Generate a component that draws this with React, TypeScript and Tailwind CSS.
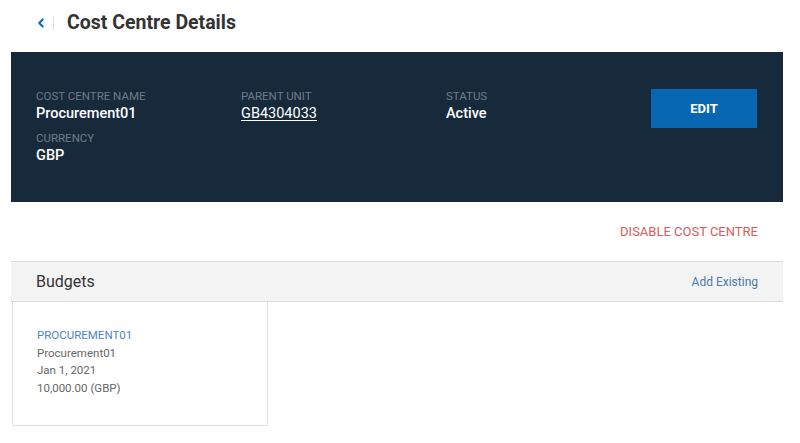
import { ChevronLeft } from "lucide-react";

export default function App() {
  return (
    <div className="min-h-screen bg-white font-['Roboto',sans-serif] text-[#333]">
      <div className="ml-[11px] w-[772px]">
        <div className="flex h-[42px] items-center pl-[23px] pt-[3px]">
          <ChevronLeft className="h-[14px] w-[14px] text-[#0a67b3]" strokeWidth={3.5} />
          <span className="ml-[5px] h-[14px] w-px bg-[#ddd]" />
          <h1 className="ml-[13px] text-[19.5px] font-bold text-[#333]">Cost Centre Details</h1>
        </div>

        <div className="mt-[10px] flex h-[150px] bg-[#172a3b] pl-[25px] pt-[37px]">
          <div className="flex w-[205px] flex-col gap-[8px]">
            <Field label="COST CENTRE NAME" value="Procurement01" />
            <Field label="CURRENCY" value="GBP" />
          </div>
          <div className="w-[205px]">
            <Field label="PARENT UNIT" value="GB4304033" link />
          </div>
          <div className="w-[205px]">
            <Field label="STATUS" value="Active" />
          </div>
          <button className="h-[39px] w-[106px] bg-[#0867b3] text-[13px] font-bold text-white">EDIT</button>
        </div>

        <div className="flex h-[59px] items-center justify-end pr-[25px]">
          <span className="text-[13px] text-[#e0595a]">DISABLE COST CENTRE</span>
        </div>

        <div className="flex h-[41px] items-center justify-between border-y border-[#dcdcdc] bg-[#f3f3f3] px-[25px]">
          <h2 className="text-[16px] text-[#333]">Budgets</h2>
          <span className="text-[12px] text-[#4a78b0]">Add Existing</span>
        </div>

        <div className="ml-[1px] h-[124px] w-[256px] rounded-b-[2px] border border-t-0 border-[#dedede] pl-[24px] pt-[25px] text-[11.5px] leading-[17.5px] text-[#666]">
          <p className="text-[11.5px] text-[#4a86c5]">PROCUREMENT01</p>
          <p>Procurement01</p>
          <p>Jan 1, 2021</p>
          <p>10,000.00 (GBP)</p>
        </div>
      </div>
    </div>
  );
}

function Field({ label, value, link }: { label: string; value: string; link?: boolean }) {
  return (
    <div>
      <p className="text-[11.5px] leading-[15px] text-[#6d7c8a]">{label}</p>
      <p className={`text-[14.5px] leading-[19px] text-white ${link ? "font-normal underline underline-offset-2" : "font-medium"}`}>{value}</p>
    </div>
  );
}
